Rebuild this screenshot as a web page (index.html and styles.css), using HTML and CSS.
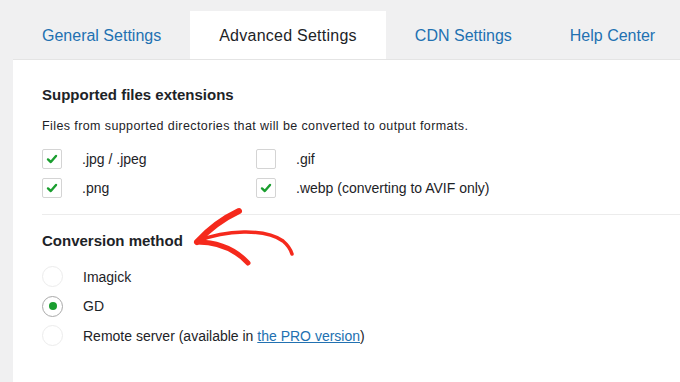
FILE: index.html
```html
<!DOCTYPE html>
<html lang="en">
<head>
  <meta charset="UTF-8">
  <meta name="viewport" content="width=device-width, initial-scale=1.0">
  <title>Advanced Settings</title>
  <link rel="stylesheet" href="styles.css">
</head>
<body>
  <div class="wrap">
    <!-- Tabs -->
    <nav class="tabs">
      <a class="tab" href="#">General Settings</a>
      <a class="tab active" href="#">Advanced Settings</a>
      <a class="tab" href="#">CDN Settings</a>
      <a class="tab" href="#">Help Center</a>
    </nav>

    <div class="panel">
      <h2>Supported files extensions</h2>
      <p class="desc">Files from supported directories that will be converted to output formats.</p>

      <div class="checks">
        <label class="opt">
          <span class="box checked"><svg viewBox="0 0 12 12"><path d="M2 6.4 L4.8 9 L10 3"/></svg></span>
          <span>.jpg / .jpeg</span>
        </label>
        <label class="opt">
          <span class="box"></span>
          <span>.gif</span>
        </label>
        <label class="opt">
          <span class="box checked"><svg viewBox="0 0 12 12"><path d="M2 6.4 L4.8 9 L10 3"/></svg></span>
          <span>.png</span>
        </label>
        <label class="opt">
          <span class="box checked"><svg viewBox="0 0 12 12"><path d="M2 6.4 L4.8 9 L10 3"/></svg></span>
          <span>.webp (converting to AVIF only)</span>
        </label>
      </div>

      <hr class="divider">

      <h2>Conversion method</h2>
      <div class="radios">
        <label class="opt">
          <span class="radio"></span>
          <span>Imagick</span>
        </label>
        <label class="opt">
          <span class="radio on"></span>
          <span>GD</span>
        </label>
        <label class="opt">
          <span class="radio"></span>
          <span>Remote server (available in <a href="#">the PRO version</a>)</span>
        </label>
      </div>

      <!-- hand drawn arrow pointing at the heading -->
      <svg class="arrow" viewBox="0 0 110 65" width="110" height="65">
        <path d="M8 36 C 35 25 75 23 93 36 Q 100 42 102 49" stroke-width="3.5"/>
        <path d="M7 37 C 18 25 32 14 49 6" stroke-width="6"/>
        <path d="M7 37 C 28 37 45 44 58 58" stroke-width="5"/>
      </svg>
    </div>
  </div>
</body>
</html>
```

FILE: styles.css
```css
/* Base */
* {
  margin: 0;
  padding: 0;
  box-sizing: border-box;
}
body {
  background: #f0f0f1;
  color: #1d2327;
  font-family: 'Liberation Sans', Arial, sans-serif;
  height: 382px;
  overflow: hidden;
}
.wrap {
  padding: 11px 0 0 13px;
  height: 100%;
  display: flex;
  flex-direction: column;
}

/* Tabs */
.tabs {
  display: flex;
}
.tab {
  display: block;
  flex-shrink: 0;
  white-space: nowrap;
  padding: 1px 29px 0;
  height: 48px;
  line-height: 47px;
  font-size: 16px;
  color: #2271b1;
  text-decoration: none;
}
.tab.active {
  background: #fff;
  color: #1d2327;
  letter-spacing: 0.25px;
}

/* Panel */
.panel {
  position: relative;
  flex: 1;
  background: #fff;
  border-top: 1px solid #e4e4e4;
  padding: 25px 0 0 29px;
}
h2 {
  font-size: 15px;
  font-weight: 700;
  line-height: 20px;
}
.desc {
  font-size: 12.5px;
  line-height: 16px;
  margin-top: 13px;
  letter-spacing: 0.4px;
}
.checks {
  display: grid;
  grid-template-columns: 214px auto;
  row-gap: 9px;
  margin-top: 15px;
}
.opt {
  display: flex;
  align-items: center;
  gap: 20px;
  font-size: 14px;
  line-height: 20px;
}
.box {
  width: 20px;
  height: 20px;
  border: 1px solid #d4d4d4;
  border-radius: 2px;
  display: flex;
  align-items: center;
  justify-content: center;
}
.box svg {
  width: 12px;
  height: 12px;
  fill: none;
  stroke: #1a9e2f;
  stroke-width: 2.4;
  stroke-linecap: round;
  stroke-linejoin: round;
}
.divider {
  border: none;
  border-top: 1px solid #ececec;
  margin: 16px 0 16px;
}
.radios {
  display: flex;
  flex-direction: column;
  gap: 8.5px;
  margin-top: 15px;
}
.radio {
  width: 21px;
  height: 21px;
  border: 1px solid #ececec;
  border-radius: 50%;
  display: flex;
  align-items: center;
  justify-content: center;
}
.radio.on {
  border-color: #a9a9a9;
}
.radio.on::after {
  content: "";
  width: 8px;
  height: 8px;
  border-radius: 50%;
  background: #1a9e2f;
}
.radios a {
  color: #2271b1;
}

/* Arrow overlay */
.arrow {
  position: absolute;
  left: 177px;
  top: 145px;
  fill: none;
  stroke: #f5291c;
  stroke-linecap: round;
  stroke-linejoin: round;
}
```
